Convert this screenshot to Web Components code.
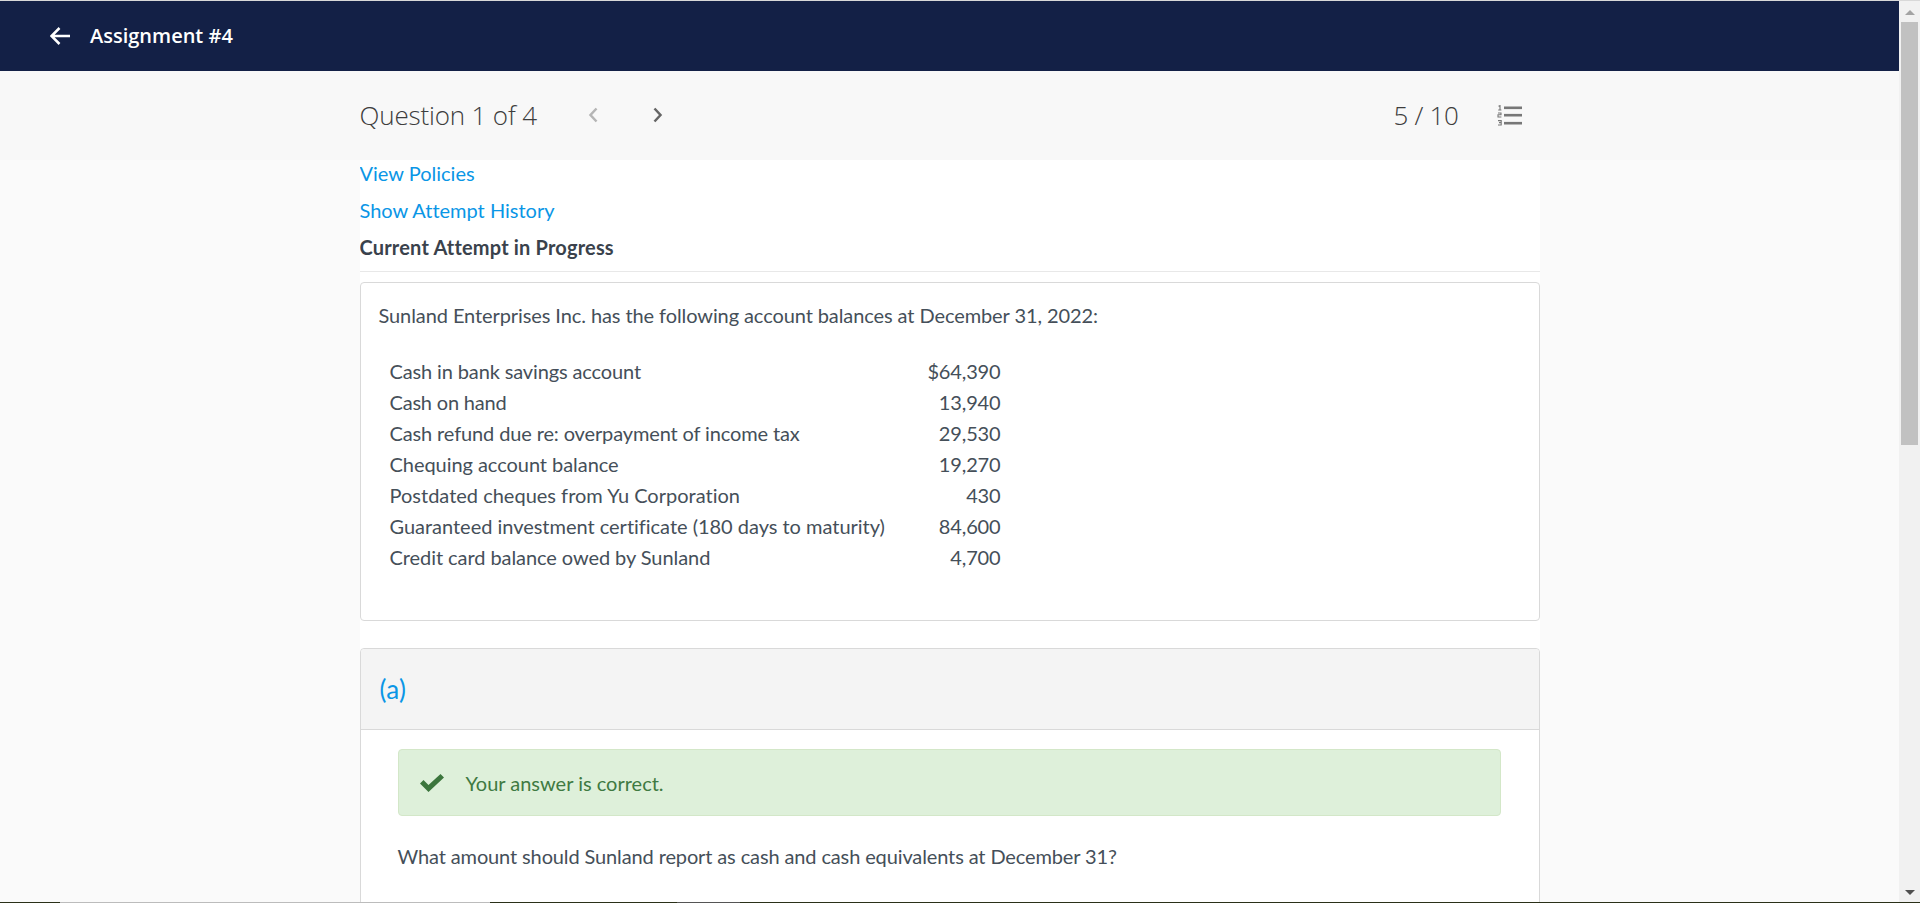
<!DOCTYPE html>
<html><head><meta charset="utf-8">
<style>
html,body{margin:0;padding:0;height:903px;overflow:hidden;background:#fafafa;}
body{font-family:"Lato","Liberation Sans",sans-serif;color:#454f59;font-variant-ligatures:none;}
</style></head>
<body>
<template id="t-shell"><style>
:host{display:grid;grid-template-columns:1899px 21px;grid-template-rows:1px 901px 1px;height:903px;}
.top{grid-column:1/3;background:#d8d8d8;}
.main{overflow:hidden;background:#fafafa;}
.strip{grid-column:1/3;background:linear-gradient(90deg,#2a3018 0 60px,#bcbcbc 60px 490px,#2a3018 490px 677px,#555 677px 740px,#2a3018 740px);}
</style><div class="top"></div><div class="main"><slot></slot></div><fake-scrollbar></fake-scrollbar><div class="strip"></div></template>

<template id="t-scroll"><style>
:host{display:flex;flex-direction:column;align-items:center;background:#f1f1f1;height:901px;padding:0 2px 0 2px;box-sizing:border-box;}
.up,.down{flex:none;width:0;height:0;border-left:5px solid transparent;border-right:5px solid transparent;}
.up{margin-top:9px;border-bottom:5px solid #a3a3a3;}
.thumb{flex:none;width:17px;height:423px;margin-top:7px;background:#c1c1c1;}
.sp{flex:1;}
.down{margin-bottom:7px;border-top:5px solid #505050;}
</style><div class="up"></div><div class="thumb"></div><div class="sp"></div><div class="down"></div></template>

<template id="t-head"><style>
:host{display:flex;align-items:center;height:70px;background:#132046;color:#fff;padding-left:50px;font:600 20px "Open Sans",sans-serif;gap:20px;}
svg{display:block;}
span{position:relative;top:-1px;}
</style><svg width="20" height="18" viewBox="0 0 20 18"><path d="M20 9H1.5M9.5 1L1.5 9L9.5 17" fill="none" stroke="#fff" stroke-width="2.5"/></svg><span><slot></slot></span></template>

<template id="t-bar"><style>
:host{display:block;background:#f8f8f8;height:89px;}
.in{box-sizing:border-box;padding-bottom:2px;width:1180px;height:89px;margin:0 auto;display:flex;align-items:center;font:300 26px "Open Sans",sans-serif;color:#3d3d3d;}
.q{width:228px;letter-spacing:-.16px;}
.ch{display:block;}
.sp{flex:1;}
.nav{width:65px;}
.score{margin-right:38px;letter-spacing:-.3px;}
.list{margin-right:18px;margin-top:2px;display:block;}
</style><div class="in"><span class="q"><slot name="q"></slot></span>
<span class="nav"><svg class="ch" width="10" height="16" viewBox="0 0 10 16"><path d="M8.5 1.5L2.5 8L8.5 14.5" fill="none" stroke="#b5b5b5" stroke-width="2.5"/></svg></span>
<svg class="ch" width="10" height="16" viewBox="0 0 10 16"><path d="M1.5 1.5L7.5 8L1.5 14.5" fill="none" stroke="#666" stroke-width="2.5"/></svg>
<span class="sp"></span><span class="score"><slot name="s"></slot></span>
<svg class="list" width="25" height="22" viewBox="0 0 25 22"><g fill="#777"><rect x="7" y="1.5" width="18" height="2.6"/><rect x="7" y="8.9" width="18" height="2.6"/><rect x="7" y="16.9" width="18" height="2.6"/></g><g fill="none" stroke="#777" stroke-width="1.1"><path d="M1.5 1.2L3 .6V5M1.2 5H4.4"/><path d="M1 8H4V9.8H1V12H4.4"/><path d="M1 15.6H4.2V17.6H2M4.2 17.6V20H1"/></g></svg>
</div></template>

<template id="t-col"><style>
:host{display:block;width:1180px;margin:0 auto;background:#fff;height:742px;overflow:hidden;}
</style><slot></slot></template>

<template id="t-link"><style>
:host{display:flex;align-items:center;height:26px;padding-bottom:11px;font-size:20px;color:#0a96e6;}
:host([plain]){font-weight:700;color:#3a424c;letter-spacing:.18px;}
</style><slot></slot></template>

<template id="t-card"><style>
:host{display:block;box-sizing:border-box;border:1px solid #d9d9d9;border-radius:4px;background:#fff;}
</style><slot></slot></template>

<template id="t-acct"><style>
:host{display:block;height:339px;margin-top:10px;font-size:20px;}
.in{padding:17px 18px 0;}
.lead{line-height:30px;margin-bottom:26px;letter-spacing:-.09px;}
</style><q-card style="height:339px"><div class="in"><div class="lead"><slot name="lead"></slot></div><slot></slot></div></q-card></template>

<template id="t-row"><style>
:host{display:grid;grid-template-columns:auto 1fr;width:611px;margin-left:11px;height:31px;line-height:31px;font-size:20px;}
.v{text-align:right;letter-spacing:-.15px;}
</style><span><slot></slot></span><span class="v"><slot name="v"></slot></span></template>

<template id="t-part"><style>
:host{display:block;margin-top:27px;}
.h{height:80px;background:#f4f4f4;border-bottom:1px solid #d9d9d9;padding-left:19px;display:flex;align-items:center;font-size:26px;letter-spacing:.3px;color:#0a96e6;border-radius:4px 4px 0 0;}
.b{padding:19px 38px 0 37px;}
</style><q-card style="height:600px"><div class="h"><slot name="label"></slot></div><div class="b"><slot></slot></div></q-card></template>

<template id="t-ok"><style>
:host{display:flex;align-items:center;height:67px;box-sizing:border-box;background:#def0da;border:1px solid #d3e7c8;border-radius:4px;color:#3f7a42;font-size:20px;padding-left:21px;gap:22px;}
svg{display:block;}
</style><svg width="24" height="18" viewBox="0 0 24 18"><path d="M0 9.5L3.5 6L8.5 11L20.5 0L24 3.5L8.5 18Z" fill="#3c763d"/></svg><span><slot></slot></span></template>

<script>
function def(n,t){customElements.define(n,class extends HTMLElement{constructor(){super();this.attachShadow({mode:'open'}).appendChild(document.getElementById(t).content.cloneNode(true));}});}
def('fake-scrollbar','t-scroll');def('q-card','t-card');def('app-shell','t-shell');def('app-header','t-head');def('q-bar','t-bar');def('q-col','t-col');def('q-link','t-link');def('q-acct','t-acct');def('q-row','t-row');def('q-part','t-part');def('q-ok','t-ok');
</script>
<app-shell>
<app-header>Assignment #4</app-header>
<q-bar><span slot="q">Question 1 of 4</span><span slot="s">5 / 10</span></q-bar>
<q-col>
<q-link>View Policies</q-link>
<q-link>Show Attempt History</q-link>
<q-link plain style="border-bottom:1px solid #e8e8e8">Current Attempt in Progress</q-link>
<q-acct><span slot="lead">Sunland Enterprises Inc. has the following account balances at December 31, 2022:</span>
<q-row style="letter-spacing:-.13px">Cash in bank savings account<span slot="v">$64,390</span></q-row>
<q-row style="letter-spacing:-.2px">Cash on hand<span slot="v">13,940</span></q-row>
<q-row style="letter-spacing:-.13px">Cash refund due re: overpayment of income tax<span slot="v">29,530</span></q-row>
<q-row style="letter-spacing:-.05px">Chequing account balance<span slot="v">19,270</span></q-row>
<q-row>Postdated cheques from Yu Corporation<span slot="v">430</span></q-row>
<q-row style="font-variant-ligatures:normal;letter-spacing:-.02px">Guaranteed investment certificate (180 days to maturity)<span slot="v">84,600</span></q-row>
<q-row style="letter-spacing:-.07px">Credit card balance owed by Sunland<span slot="v">4,700</span></q-row>
</q-acct>
<q-part><span slot="label">(a)</span>
<q-ok>Your answer is correct.</q-ok>
<div style="margin-top:25px;font-size:20px;line-height:30px;letter-spacing:-.125px">What amount should Sunland report as cash and cash equivalents at December 31?</div>
</q-part>
</q-col>
</app-shell>
</body></html>
